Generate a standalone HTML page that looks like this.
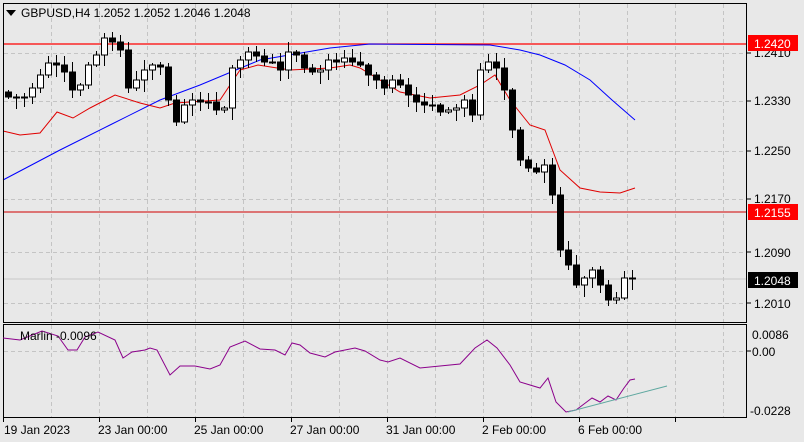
<!DOCTYPE html>
<html><head><meta charset="utf-8">
<style>
body{margin:0;width:804px;height:442px;background:#e8e8e8;overflow:hidden;font-family:"Liberation Sans",sans-serif}
svg{position:absolute;left:0;top:0}
text{font-family:"Liberation Sans",sans-serif;font-size:12px;fill:#000}
</style></head><body>
<svg id="s" width="804" height="442" xmlns="http://www.w3.org/2000/svg">
<rect x="0" y="0" width="804" height="442" fill="#e8e8e8"/>
<g id="grid" stroke="#c4c4c4" stroke-dasharray="4,3" stroke-width="1"></g>
<line x1="3" y1="44" x2="747" y2="44" stroke="#ff0000" stroke-width="1.3"/>
<line x1="3" y1="212" x2="747" y2="212" stroke="#d00000" stroke-width="1"/>
<line x1="3" y1="279" x2="747" y2="279" stroke="#c8c8c8" stroke-width="1"/>
<polyline fill="none" stroke="#0000ff" stroke-width="1" points="3,180 60,150 110,125 160,100 200,85 260,60 330,48 370,44 490,45 520,50 540,55 565,65 590,80 612,100 635,120"/>
<polyline fill="none" stroke="#e00000" stroke-width="1" points="3,131 20,135 40,133 57,112 73,118 90,108 115,95 140,103 160,108 175,103 205,101 220,100 240,70 258,65 290,70 330,68 350,65 360,68 380,80 400,92 430,98 460,95 480,85 495,75 510,100 530,125 545,130 560,170 580,188 600,192 620,193 635,188"/>
<g id="c"></g>
<rect x="3.5" y="3.5" width="743" height="319" fill="none" stroke="#000"/>
<rect x="3.5" y="324.5" width="743" height="93" fill="none" stroke="#000"/>
<polygon points="6,10 16,10 11,16" fill="#000"/>
<text x="21" y="17">GBPUSD,H4  1.2052 1.2052 1.2046 1.2048</text>
<polyline fill="none" stroke="#8b008b" stroke-width="1" points="3,338 20,340 42,331 58,336 68,350 77,350 85,337 98,332 115,340 123,358 132,352 145,350 150,348 157,350 170,375 180,366 195,366 210,369 220,365 230,347 245,341 260,349 275,350 285,355 292,343 300,345 310,353 325,357 335,352 345,350 355,348 365,351 380,360 388,362 400,358 420,368 440,366 460,364 475,348 487,340 497,348 510,365 520,382 530,385 540,388 548,378 556,402 566,412 576,410 584,404 592,398 600,402 608,396 616,400 624,388 630,380 635,379"/>
<line x1="568" y1="412" x2="667" y2="386" stroke="#5fa8a0" stroke-width="1"/>
<text x="20" y="340">Marlin -0.0096</text>
<g stroke="#000"><line x1="747" y1="53" x2="751" y2="53"/><line x1="747" y1="101" x2="751" y2="101"/><line x1="747" y1="151" x2="751" y2="151"/><line x1="747" y1="199" x2="751" y2="199"/><line x1="747" y1="252" x2="751" y2="252"/><line x1="747" y1="303" x2="751" y2="303"/><line x1="747" y1="351" x2="751" y2="351"/></g>
<text x="754" y="57">1.2410</text>
<text x="754" y="105">1.2330</text>
<text x="754" y="155">1.2250</text>
<text x="754" y="203">1.2170</text>
<text x="754" y="257">1.2090</text>
<text x="754" y="308">1.2010</text>
<rect x="748" y="35" width="50" height="16" fill="#ff0000"/><text x="754" y="48" style="fill:#fff">1.2420</text>
<rect x="748" y="204" width="50" height="16" fill="#ff0000"/><text x="754" y="217" style="fill:#fff">1.2155</text>
<rect x="748" y="272" width="50" height="16" fill="#000"/><text x="754" y="285" style="fill:#fff">1.2048</text>
<text x="752" y="339">0.0086</text>
<text x="752" y="356">0.00</text>
<text x="750" y="415">-0.0228</text>
<text x="4" y="434">19 Jan 2023</text>
<text x="98" y="434">23 Jan 00:00</text>
<text x="194" y="434">25 Jan 00:00</text>
<text x="290" y="434">27 Jan 00:00</text>
<text x="386" y="434">31 Jan 00:00</text>
<text x="482" y="434">2 Feb 00:00</text>
<text x="578" y="434">6 Feb 00:00</text>
</svg>
<script>
(function(){
var NS="http://www.w3.org/2000/svg";
var g=document.getElementById('grid');
function L(p,x1,y1,x2,y2,st){var l=document.createElementNS(NS,'line');l.setAttribute('x1',x1);l.setAttribute('y1',y1);l.setAttribute('x2',x2);l.setAttribute('y2',y2);if(st)l.setAttribute('stroke',st);p.appendChild(l);}
for(var x=51;x<747;x+=48){L(g,x+.5,4,x+.5,322);L(g,x+.5,325,x+.5,417);}
[53,101,151,199,252,303].forEach(function(y){L(g,4,y+.5,746,y+.5);});
L(g,4,351.5,746,351.5);
var t=document.getElementById('s');
for(var x2=3;x2<747;x2+=96){L(t,x2+.5,418,x2+.5,422,'#000');}
var cl=[97,98,97,88,75,63,65,72,90,85,65,55,38,42,50,88,80,70,65,67,100,122,105,100,102,102,110,108,68,60,52,56,62,62,70,52,55,68,72,70,60,62,58,62,65,75,80,88,80,85,95,102,105,105,112,110,108,100,115,70,62,68,90,130,160,168,172,165,195,250,265,285,278,270,285,300,298,278,279];
var c=document.getElementById('c');var op=92;
for(var i=0;i<cl.length;i++){var cx=8+i*8,cy=cl[i],o=op;var tp=Math.min(o,cy),bt=Math.max(o,cy);
var r1=2+((i*37)%9),r2=2+((i*53)%11);
L(c,cx+.5,tp-r1,cx+.5,bt+r2,'#000');
var R=document.createElementNS(NS,'rect');R.setAttribute('x',cx-2.5);R.setAttribute('y',tp);R.setAttribute('width',6);R.setAttribute('height',Math.max(1,bt-tp));
R.setAttribute('stroke','#000');R.setAttribute('fill',cy<o?'#fff':'#000');c.appendChild(R);op=cy;}
})();
</script>
</body></html>
